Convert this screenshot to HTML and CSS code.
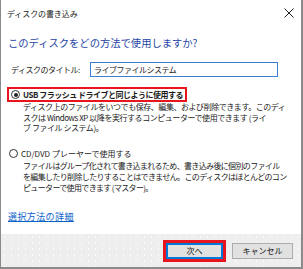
FILE: index.html
```html
<!DOCTYPE html>
<html lang="ja">
<head>
<meta charset="utf-8">
<link rel="stylesheet" href="styles.css">
</head>
<body>
<div class="window">
  <div class="titlebar">
    <span class="title">ディスクの書き込み</span>
    <svg class="close" width="10" height="10" viewBox="0 0 10 10"><path d="M0.5 0.5 L9.5 9.5 M9.5 0.5 L0.5 9.5" stroke="#222" stroke-width="1" fill="none"/></svg>
  </div>
  <div class="content">
    <div class="heading">このディスクをどの方法で使用しますか?</div>
    <div class="namerow">
      <span class="namelabel">ディスクのタイトル:</span>
      <div class="input">ライブファイルシステム</div>
    </div>
    <div class="option first">
      <div class="optlabel highlight"><span class="radio checked"></span><span class="bold">USB フラッシュ ドライブと同じように使用する</span></div>
      <div class="desc">
        <div>ディスク上のファイルをいつでも保存、編集、および削除できます。このディ</div>
        <div>スクは Windows XP 以降を実行するコンピューターで使用できます (ライ</div>
        <div>ブ ファイル システム)。</div>
      </div>
    </div>
    <div class="option second">
      <div class="optlabel"><span class="radio"></span><span>CD/DVD プレーヤーで使用する</span></div>
      <div class="desc">
        <div>ファイルはグループ化されて書き込まれるため、書き込み後に個別のファイル</div>
        <div>を編集したり削除したりすることはできません。このディスクはほとんどのコン</div>
        <div>ピューターで使用できます (マスター)。</div>
      </div>
    </div>
    <a class="link" href="#">選択方法の詳細</a>
  </div>
  <div class="footer">
    <span class="redbox"><span class="btn default">次へ</span></span>
    <span class="btn">キャンセル</span>
  </div>
</div>
</body>
</html>
```
FILE: styles.css
```css
html, body {
  margin: 0;
  padding: 0;
  background: #fff;
}
body {
  font-family: "Noto Sans CJK JP", "Noto Sans", sans-serif;
  font-size: 8px;
  color: #1a1a1a;
}
.window {
  width: 303px;
  height: 269px;
  box-sizing: border-box;
  border-left: 1px solid #8a8a8a;
  border-right: 2px solid #8a8a8a;
  border-bottom: 2px solid #8a8a8a;
  display: flex;
  flex-direction: column;
  background: #fff;
}
.titlebar {
  height: 26px;
  display: flex;
  align-items: center;
  justify-content: space-between;
  padding: 0 7px 0 6px;
}
.title {
  font-size: 8px;
  color: #222;
  letter-spacing: -0.1px;
}
.close {
  display: block;
}
.content {
  flex: 1;
  padding: 10px 0 0 7px;
  display: flex;
  flex-direction: column;
  align-items: flex-start;
}
.heading {
  font-size: 10.3px;
  line-height: 14px;
  color: #1f45a6;
}
.namerow {
  margin-top: 12px;
  display: flex;
  align-items: center;
  height: 15px;
}
.namelabel {
  width: 79px;
  padding-left: 3px;
  letter-spacing: -0.5px;
}
.input {
  width: 188px;
  height: 15px;
  box-sizing: border-box;
  border: 1px solid #3c7fd0;
  padding-left: 3px;
  line-height: 13px;
  letter-spacing: -0.5px;
}
.option {
  display: flex;
  flex-direction: column;
  align-items: flex-start;
}
.option.first {
  margin-top: 10px;
}
.option.second {
  margin-top: 13px;
}
.optlabel {
  display: flex;
  align-items: center;
  height: 13px;
  padding-left: 1px;
  gap: 3px;
  letter-spacing: 0;
}
.optlabel.highlight {
  height: 11px;
  border: 2px solid #e8141e;
  padding: 0 2px 0 2px;
  margin-left: -1px;
}
.bold {
  font-weight: bold;
  letter-spacing: -0.5px;
}
.radio {
  width: 9px;
  height: 9px;
  box-sizing: border-box;
  border: 1px solid #333;
  border-radius: 50%;
  display: inline-flex;
  align-items: center;
  justify-content: center;
  flex: none;
}
.radio.checked::after {
  content: "";
  width: 4px;
  height: 4px;
  border-radius: 50%;
  background: #222;
}
.desc {
  padding-left: 15px;
  line-height: 10.7px;
  white-space: nowrap;
  letter-spacing: -0.45px;
}
.second .desc {
  line-height: 11px;
  letter-spacing: -0.65px;
}
.link {
  margin-top: 18px;
  line-height: 12px;
  color: #0a63c9;
  text-decoration: underline;
  font-size: 9px;
  letter-spacing: 0.4px;
}
.footer {
  height: 33px;
  flex: none;
  background-color: #eeeeee;
  background-image: radial-gradient(circle, #fbfbfb 0.6px, transparent 0.9px);
  background-size: 7px 6px;
  display: flex;
  align-items: center;
  justify-content: flex-end;
  padding-right: 8px;
  gap: 6px;
}
.redbox {
  display: flex;
  border: 3px solid #e8141e;
}
.btn {
  display: flex;
  align-items: center;
  justify-content: center;
  width: 61px;
  height: 16px;
  box-sizing: border-box;
  border: 1px solid #adadad;
  background: #e1e1e1;
  font-size: 8px;
  color: #111;
}
.btn.default {
  width: 57px;
  border: 1px solid #0078d7;
  box-shadow: inset 0 0 0 1px #0078d7;
}
```
